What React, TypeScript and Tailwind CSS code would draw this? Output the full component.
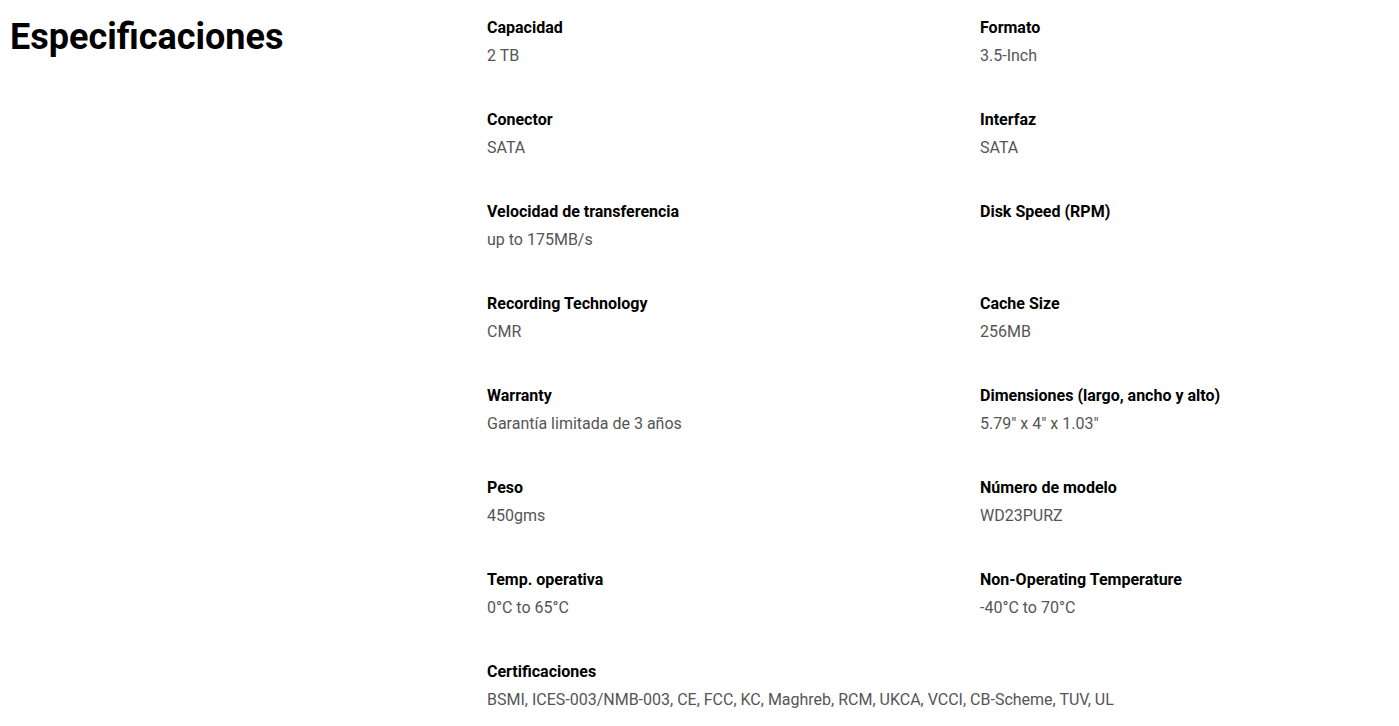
const specs = [
  { label: 'Capacidad', value: '2 TB' },
  { label: 'Formato', value: '3.5-Inch' },
  { label: 'Conector', value: 'SATA' },
  { label: 'Interfaz', value: 'SATA' },
  { label: 'Velocidad de transferencia', value: 'up to 175MB/s' },
  { label: 'Disk Speed (RPM)', value: '' },
  { label: 'Recording Technology', value: 'CMR' },
  { label: 'Cache Size', value: '256MB' },
  { label: 'Warranty', value: 'Garantía limitada de 3 años' },
  { label: 'Dimensiones (largo, ancho y alto)', value: '5.79" x 4" x 1.03"' },
  { label: 'Peso', value: '450gms' },
  { label: 'Número de modelo', value: 'WD23PURZ' },
  { label: 'Temp. operativa', value: '0°C to 65°C' },
  { label: 'Non-Operating Temperature', value: '-40°C to 70°C' },
  { label: 'Certificaciones', value: 'BSMI, ICES-003/NMB-003, CE, FCC, KC, Maghreb, RCM, UKCA, VCCI, CB-Scheme, TUV, UL' },
]

export default function App() {
  return (
    <div className="min-h-screen bg-white font-['Roboto',sans-serif] text-black">
      <div className="flex px-[10px] pt-[14px]">
        {/* Titulo */}
        <div className="w-[477px] shrink-0">
          <h2 className="mt-[1px] text-[36px] leading-[44px] font-bold">Especificaciones</h2>
        </div>

        {/* Tabla de especificaciones */}
        <div className="grid grid-cols-[493px_1fr]">
          {specs.map((s) => (
            <div key={s.label} className="mb-[36px] whitespace-nowrap">
              <div className="text-[16px] leading-[28px] font-bold">{s.label}</div>
              <div className="text-[16px] leading-[28px] text-[#555] h-[28px]">{s.value}</div>
            </div>
          ))}
        </div>
      </div>
    </div>
  )
}
